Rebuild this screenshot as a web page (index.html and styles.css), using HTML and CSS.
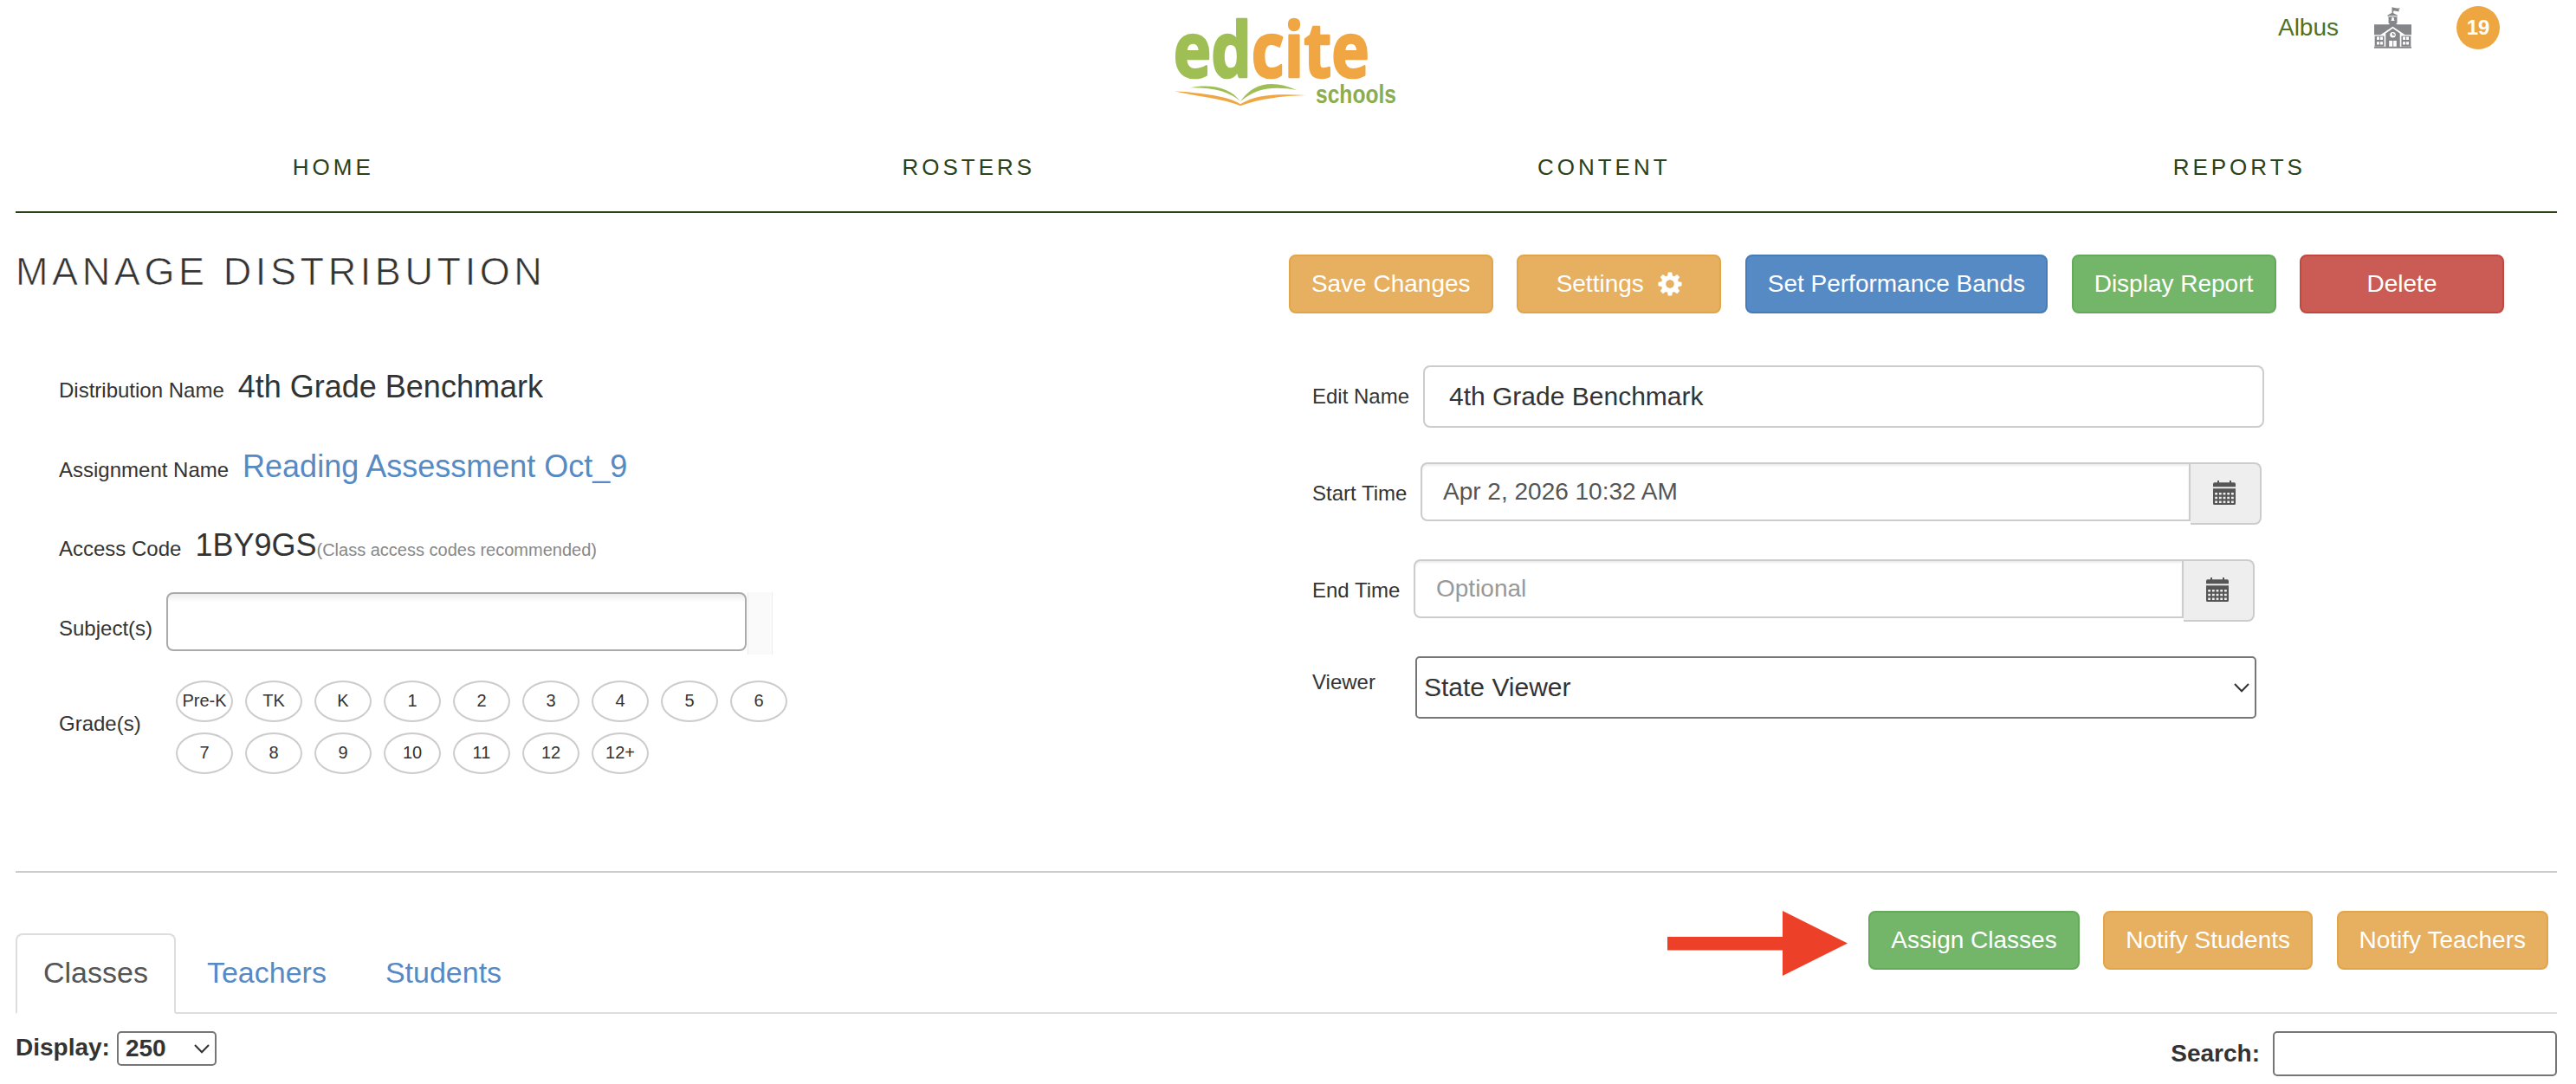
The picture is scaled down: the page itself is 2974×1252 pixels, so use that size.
FILE: index.html
```html
<!DOCTYPE html>
<html lang="en">
<head>
<meta charset="utf-8">
<title>Manage Distribution</title>
<link rel="stylesheet" href="styles.css">
</head>
<body>
<svg class="defs" width="0" height="0" aria-hidden="true">
  <symbol id="calendar" viewBox="0 0 26 28">
    <path fill="#555" fill-rule="evenodd" d="M0 7.300V4Q0 2.300 1.700 2.300H5V0h2v2.300H19V0h2v2.300h3.300Q26 2.300 26 4V7.300ZM0 9.300H26V26.500Q26 28 24.500 28H1.500Q0 28 0 26.500ZM2.200 14v2.500H5V14ZM6.900 14v2.500h2.800V14ZM11.600 14v2.500h2.800V14ZM16.300 14v2.500h2.800V14ZM21 14v2.500h2.800V14ZM2.200 18.700v2.500H5v-2.500ZM6.900 18.700v2.500h2.800v-2.500ZM11.600 18.700v2.500h2.800v-2.500ZM16.300 18.700v2.500h2.800v-2.500ZM21 18.700v2.500h2.800v-2.500ZM2.200 23.400v2.500H5v-2.500ZM6.900 23.400v2.500h2.800v-2.500ZM11.600 23.400v2.500h2.800v-2.500ZM16.300 23.400v2.500h2.800v-2.500ZM21 23.400v2.500h2.800v-2.500Z"/>
  </symbol>
  <symbol id="chevron" viewBox="0 0 18 11">
    <path fill="none" stroke="#333" stroke-width="2" d="M1 1 9 9.300 17 1"/>
  </symbol>
</svg>

<header class="header">
  <svg class="logo" viewBox="0 0 960 450" role="img" aria-label="edcite schools">
    <text class="logo-word" x="74" y="267" textLength="678" lengthAdjust="spacingAndGlyphs"><tspan class="logo-green">ed</tspan><tspan class="logo-orange">cite</tspan></text>
    <path fill="#9fbf54" d="M132 304C205 289 275 305 306 352C275 320 215 303 132 304Z"/>
    <path fill="#9fbf54" d="M306 352C350 285 420 275 501 312C430 300 365 300 306 352Z"/>
    <path fill="#efa643" d="M78 316C170 322 265 333 306 361C360 325 440 325 533 330C450 332 370 343 306 367C250 343 160 335 78 316Z"/>
    <text class="logo-sub" x="567" y="358" textLength="279" lengthAdjust="spacingAndGlyphs">schools</text>
  </svg>
  <div class="user">
    <a class="user-name">Albus</a>
    <svg class="school" viewBox="0 0 130 144">
      <g fill="#85868a">
        <path d="M62 0h3v2q6-1 10 1t16 1l-6 6 3 5q-9 1-13-1t-8 0v7l14 7v4H80v24L65 61 50 56V32H47V28l15-8Z"/>
        <path d="M0 61H50L65 50 80 61h50V97H108L65 68 22 97H0Z"/>
        <path d="M2 101H35V137H2ZM95 101h33v36H95ZM0 138H130v6H0ZM40 92 65 74 90 92v46H40Z"/>
      </g>
      <g fill="none" stroke="#fff" stroke-width="3"><path d="M38 138V91L65 71 92 91V138M50 32H80"/></g>
      <circle cx="65" cy="97" r="10" fill="#fff"/>
      <path d="M65 90v7h7" fill="none" stroke="#85868a" stroke-width="4"/>
      <path fill="#fff" d="M58 48q3-3 3-8t4-5q4 0 4 5t3 8ZM52 117H64v21H52ZM67 117H78v21H67ZM9 104h9v10H9ZM21 104h9v10H21ZM9 121h9v10H9ZM21 121h9v10H21ZM100 104h9v10H100ZM112 104h9v10H112ZM100 121h9v10H100ZM112 121h9v10H112Z"/>
    </svg>
    <span class="badge">19</span>
  </div>
</header>

<nav class="nav">
  <a>HOME</a><a>ROSTERS</a><a>CONTENT</a><a>REPORTS</a>
</nav>

<main>
  <section class="titlebar">
    <h1>MANAGE DISTRIBUTION</h1>
    <div class="actions">
      <button class="btn warn">Save Changes</button>
      <button class="btn warn">Settings
        <svg class="gear" viewBox="0 0 28 28"><path fill="#fff" fill-rule="evenodd" d="M11.800.5h4.400l.7 3.900 2 .8 3.300-2.200 3 3-2.200 3.300.8 2 3.700.6v4.300l-3.700.7-.8 2 2.200 3.200-3 3.100-3.300-2.300-2 .8-.7 3.800h-4.400l-.7-3.800-2-.8-3.300 2.300-3-3.100L5 18.900l-.8-2L.5 16.200v-4.300l3.700-.6.8-2L2.800 6l3-3L9.100 5.200l2-.8ZM14 9.200a4.800 4.800 0 1 0 0 9.600 4.800 4.800 0 0 0 0-9.600Z"/></svg>
      </button>
      <button class="btn primary">Set Performance Bands</button>
      <button class="btn success">Display Report</button>
      <button class="btn danger">Delete</button>
    </div>
  </section>

  <section class="details">
    <div class="summary">
      <div class="line"><span class="label">Distribution Name</span><span class="value">4th Grade Benchmark</span></div>
      <div class="line"><span class="label">Assignment Name</span><a class="value link">Reading Assessment Oct_9</a></div>
      <div class="line"><span class="label">Access Code</span><span class="value">1BY9GS<small>(Class access codes recommended)</small></span></div>
      <div class="subjects">
        <label class="label">Subject(s)</label>
        <input class="subject-box" type="text">
        <span class="subject-edge"></span>
      </div>
      <div class="grades">
        <span class="label">Grade(s)</span>
        <div class="grade-list">
          <span>Pre-K</span><span>TK</span><span>K</span><span>1</span><span>2</span><span>3</span><span>4</span><span>5</span><span>6</span>
          <span>7</span><span>8</span><span>9</span><span>10</span><span>11</span><span>12</span><span>12+</span>
        </div>
      </div>
    </div>

    <form class="form">
      <div class="field name">
        <label class="label">Edit Name</label>
        <input class="text" type="text" value="4th Grade Benchmark">
      </div>
      <div class="field start">
        <label class="label">Start Time</label>
        <input class="date" type="text" value="Apr 2, 2026 10:32 AM">
        <span class="addon"><svg><use href="#calendar"/></svg></span>
      </div>
      <div class="field end">
        <label class="label">End Time</label>
        <input class="date" type="text" placeholder="Optional">
        <span class="addon"><svg><use href="#calendar"/></svg></span>
      </div>
      <div class="field viewer">
        <label class="label">Viewer</label>
        <div class="select">State Viewer<svg class="chevron"><use href="#chevron"/></svg></div>
      </div>
    </form>
  </section>

  <section class="assignees">
    <div class="tabs">
      <a class="tab active">Classes</a>
      <a class="tab">Teachers</a>
      <a class="tab">Students</a>
      <div class="tab-actions">
        <svg class="arrow" viewBox="0 0 208 75"><path fill="#ec4128" d="M0 30H133V0L208 37.500 133 75V45.500H0Z"/></svg>
        <button class="btn success">Assign Classes</button>
        <button class="btn warn">Notify Students</button>
        <button class="btn warn">Notify Teachers</button>
      </div>
    </div>
    <div class="table-tools">
      <label class="display">Display:
        <span class="page-size">250<svg class="chevron"><use href="#chevron"/></svg></span>
      </label>
      <label class="search">Search:<input type="text"></label>
    </div>
  </section>
</main>
</body>
</html>
```
FILE: styles.css
```css
* { box-sizing: border-box; }

body {
  margin: 0;
  padding: 0 22px 0 18px;
  height: 1252px;
  overflow: hidden;
  background: #fff;
  color: #333;
  font-family: "Liberation Sans", Arial, sans-serif;
  font-size: 28px;
}

.defs { position: absolute; }

input, button { font-family: inherit; outline: none; }

/* Header */
.header {
  display: grid;
  grid-template-columns: 320px 1fr;
  height: 150px;
  padding-left: 1312px;
}

.logo { display: block; width: 320px; height: 150px; overflow: visible; }

.logo-word {
  font-family: "Open Sans", sans-serif;
  font-size: 266px;
  font-weight: 700;
  stroke-width: 8px;
  stroke-linejoin: round;
}

.logo-green { fill: #9fbf54; stroke: #9fbf54; }
.logo-orange { fill: #efa643; stroke: #efa643; }

.logo-sub {
  fill: #8aad50;
  font-size: 86px;
  font-weight: 700;
}

.user {
  display: flex;
  justify-content: flex-end;
  align-items: center;
  height: 64px;
  padding-right: 66px;
}

.user-name { color: #4c7326; }

.school { width: 43px; height: 48px; margin: 0 52px 0 41px; }

.badge {
  width: 50px;
  border-radius: 50%;
  background: #eea640;
  color: #fff;
  font-size: 24px;
  font-weight: 700;
  line-height: 50px;
  text-align: center;
}

/* Main navigation */
.nav {
  display: grid;
  grid-template-columns: repeat(4, 1fr);
  height: 96px;
  border-bottom: 2px solid #2b4118;
  color: #2b4118;
  font-size: 26px;
  letter-spacing: 4px;
  line-height: 87px;
  text-align: center;
}

/* Title bar */
.titlebar {
  display: flex;
  justify-content: space-between;
  padding: 48px 61px 0 0;
}

h1 {
  margin: 0;
  font-size: 45px;
  font-weight: 400;
  letter-spacing: 4.6px;
  line-height: 40px;
  -webkit-text-stroke: .7px #fff;
}

.actions { display: flex; gap: 27.5px; }

.btn {
  display: flex;
  justify-content: center;
  align-items: center;
  height: 68px;
  padding: 0 24px;
  border: 2px solid;
  border-radius: 8px;
  color: #fff;
  font-size: 28px;
  line-height: 40px;
  white-space: nowrap;
}

.actions .btn { min-width: 236px; }

.warn { background: #e6b060; border-color: #e2a549; }
.primary { background: #568ac4; border-color: #467cb9; }
.success { background: #73b66a; border-color: #63ab59; }
.danger { background: #ca5c55; border-color: #c2483f; }

.gear { width: 28px; height: 28px; margin-left: 16px; }

/* Distribution details */
.details {
  display: grid;
  grid-template-columns: 1447px 1fr;
  height: 646px;
  padding: 60px 0 0 50px;
  border-bottom: 2px solid #ccc;
}

.label { font-size: 24px; line-height: 28px; white-space: nowrap; }

.summary { padding-top: 1px; }

.line {
  display: flex;
  align-items: baseline;
  gap: 16px;
  height: 48px;
  margin-bottom: 43.5px;
}

.value { font-size: 36px; line-height: 48px; }
.value small { color: #888; font-size: 20px; }
.link { color: #568ac4; }

.subjects { display: flex; margin-top: -13.5px; }
.subjects .label { width: 124px; padding-top: 28px; }

.subject-box {
  width: 670px;
  height: 68px;
  border: 2px solid #aaa;
  border-radius: 8px;
  background: linear-gradient(#eee 1%, #fff 15%);
}

.subject-edge {
  width: 29px;
  height: 72px;
  margin-left: 1px;
  border: solid #eee;
  border-width: 0 1px;
  background: #fafafa;
}

.grades { display: flex; margin-top: 30px; }
.grades .label { width: 135px; padding-top: 36px; }

.grade-list {
  display: grid;
  grid-template-columns: repeat(9, 66px);
  gap: 12px 14px;
}

.grade-list span {
  height: 48px;
  border: 2px solid #ccc;
  border-radius: 50%;
  font-size: 20px;
  line-height: 42px;
  text-align: center;
  white-space: nowrap;
}

.field { display: flex; height: 72px; margin-bottom: 40px; }
.field .label { padding-top: 22px; }
.name .label { width: 128px; }
.start .label { width: 125px; }
.end .label { width: 117px; }
.viewer .label { width: 119px; padding-top: 16px; }

.text {
  width: 971px;
  padding: 0 28px;
  border: 2px solid #ccc;
  border-radius: 8px;
  color: #333;
  font-size: 30px;
}

.date {
  width: 889px;
  height: 68px;
  padding: 0 24px;
  border: 2px solid #ccc;
  border-radius: 8px 0 0 8px;
  box-shadow: inset 0 2px 2px rgba(0, 0, 0, .075);
  color: #555;
  font-size: 28px;
}

.date::placeholder { color: #999; opacity: 1; }

.addon {
  display: flex;
  justify-content: center;
  width: 82px;
  padding-top: 19px;
  border: 2px solid #ccc;
  border-left: 0;
  border-radius: 0 8px 8px 0;
  background: #eee;
}

.addon svg { width: 26px; height: 28px; margin-right: 2px; }

.select {
  display: flex;
  justify-content: space-between;
  align-items: center;
  width: 971px;
  padding: 0 6px 0 8px;
  border: 2px solid #767676;
  border-radius: 5px;
  font-size: 30px;
}

.chevron { width: 18px; height: 11px; }

/* Tabs */
.tabs {
  display: flex;
  align-items: flex-end;
  gap: 4px;
  height: 163px;
  border-bottom: 2px solid #ddd;
}

.tab {
  height: 93px;
  margin-bottom: -2px;
  padding: 0 30px;
  border: 2px solid transparent;
  border-radius: 8px 8px 0 0;
  color: #568ac4;
  font-size: 34px;
  line-height: 86px;
}

.tab.active {
  border-color: #ddd;
  border-bottom-color: #fff;
  color: #555;
}

.tab-actions {
  display: flex;
  gap: 27.5px;
  height: 117px;
  margin-left: auto;
  padding-right: 10px;
}

.arrow { width: 208px; height: 75px; margin-right: -3px; }

.table-tools {
  display: flex;
  justify-content: space-between;
  padding-top: 20px;
  font-weight: 700;
}

.display { display: flex; gap: 8px; height: 40px; line-height: 38px; }

.page-size {
  display: flex;
  justify-content: space-between;
  align-items: center;
  width: 115px;
  padding: 0 6px 0 8px;
  border: 2px solid #767676;
  border-radius: 5px;
}

.search { display: flex; gap: 15px; line-height: 52px; }

.search input {
  width: 328px;
  height: 52px;
  border: 2px solid #767676;
  border-radius: 5px;
}
```
